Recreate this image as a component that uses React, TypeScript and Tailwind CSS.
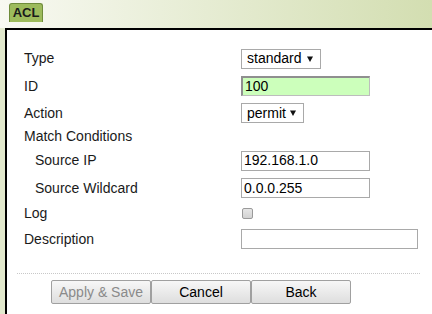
import React from "react";

const font = { fontFamily: '"Liberation Sans", Arial, sans-serif' };

function Arrow() {
  return (
    <svg width="6" height="6" viewBox="0 0 6 6" className="block">
      <path d="M0 0.5 L6 0.5 L3 6 Z" fill="#111" />
    </svg>
  );
}

function Select({ value, w }: { value: string; w: string }) {
  return (
    <div className={`${w} h-[20px] border border-[#a9a9a9] bg-white flex items-center justify-between pl-[5px] pr-[7px] text-[14px] text-black`}>
      <span>{value}</span>
      <Arrow />
    </div>
  );
}

function TextInput({ value, w, green }: { value?: string; w: string; green?: boolean }) {
  return (
    <div
      className={`${w} h-[20px] flex items-center pl-[2px] text-[14px] text-black ${
        green
          ? "bg-[#ccffbb] border border-[#bdbdbd] border-t-2 border-l-2 border-t-[#8f8f8f] border-l-[#8f8f8f]"
          : "bg-white border border-[#a9a9a9]"
      }`}
    >
      {value}
    </div>
  );
}

function Row({ label, h, indent, children }: { label: string; h: string; indent?: boolean; children?: React.ReactNode }) {
  return (
    <div className={`flex items-center ${h}`}>
      <div className={`w-[217px] shrink-0 text-[14px] text-[#1a1a1a] ${indent ? "pl-[11px]" : ""}`}>{label}</div>
      <div className="flex items-center">{children}</div>
    </div>
  );
}

function Btn({ label, disabled }: { label: string; disabled?: boolean }) {
  return (
    <div
      className={`w-[100px] h-[24px] flex items-center justify-center text-[14px] border border-[#a0a0a0] rounded-[2px] bg-gradient-to-b from-[#f7f7f7] to-[#dedede] ${
        disabled ? "text-[#8a8a8a]" : "text-black"
      }`}
    >
      {label}
    </div>
  );
}

export default function App() {
  return (
    <div className="w-[432px] h-[314px] overflow-hidden flex flex-col bg-[#e2e9cd]" style={font}>
      <div className="h-[28px] shrink-0 bg-gradient-to-r from-[#f8f9f2] to-[#d3deb1] flex items-start pl-[9px] pt-[3px]">
        <div className="w-[34px] h-[19px] bg-[#9dbb5c] border border-[#6f8c3b] border-b-0 rounded-t-[3px] flex items-center justify-center text-[13px] font-bold text-[#1a1a1a]">
          ACL
        </div>
      </div>
      <div className="flex-1 flex pl-[5px]">
        <div className="flex-1 bg-white border-t-[2px] border-l-[2px] border-black pl-[17px] pt-[15px] flex flex-col">
          <Row label="Type" h="h-[27px]">
            <Select value="standard" w="w-[80px]" />
          </Row>
          <Row label="ID" h="h-[28px]">
            <TextInput value="100" w="w-[129px]" green />
          </Row>
          <Row label="Action" h="h-[26px]">
            <Select value="permit" w="w-[63px]" />
          </Row>
          <Row label="Match Conditions" h="h-[21px]" />
          <Row label="Source IP" h="h-[27px]" indent>
            <TextInput value="192.168.1.0" w="w-[129px]" />
          </Row>
          <Row label="Source Wildcard" h="h-[28px]" indent>
            <TextInput value="0.0.0.255" w="w-[129px]" />
          </Row>
          <Row label="Log" h="h-[22px]">
            <div className="w-[11px] h-[11px] ml-[1px] rounded-[2px] border border-[#9a9a9a] bg-gradient-to-b from-[#e6e6e6] to-[#d2d2d2]" />
          </Row>
          <Row label="Description" h="h-[30px]">
            <TextInput w="w-[177px]" />
          </Row>
          <div className="mt-[19px] ml-[-7px] mr-[12px] border-t border-dotted border-[#c8c8c8]" />
          <div className="mt-[6px] ml-[27px] flex">
            <Btn label="Apply & Save" disabled />
            <Btn label="Cancel" />
            <Btn label="Back" />
          </div>
        </div>
      </div>
    </div>
  );
}
